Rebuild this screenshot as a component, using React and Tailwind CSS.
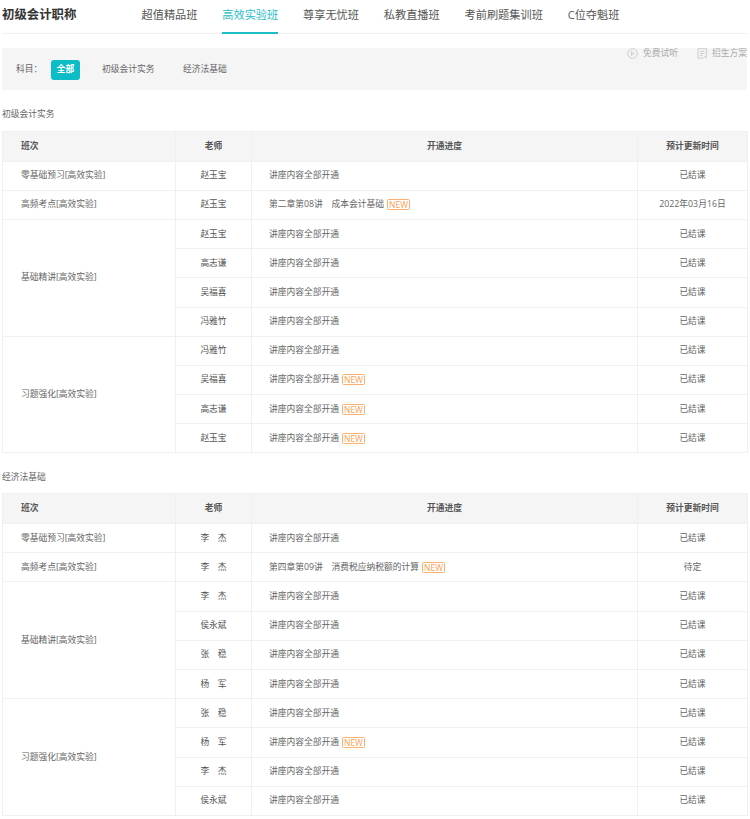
import React from "react";

const FONT = "font-['Open_Sans','Noto_Sans_CJK_SC',sans-serif]";

const tabs = ["超值精品班", "高效实验班", "尊享无忧班", "私教直播班", "考前刷题集训班", "C位夺魁班"];

const done = "讲座内容全部开通";

const sections = [
  {
    title: "初级会计实务",
    groups: [
      { name: "零基础预习[高效实验]", rows: [["赵玉宝", done, false, "已结课"]] },
      { name: "高频考点[高效实验]", rows: [["赵玉宝", "第二章第08讲　成本会计基础", true, "2022年03月16日"]] },
      {
        name: "基础精讲[高效实验]",
        rows: [
          ["赵玉宝", done, false, "已结课"],
          ["高志谦", done, false, "已结课"],
          ["吴福喜", done, false, "已结课"],
          ["冯雅竹", done, false, "已结课"],
        ],
      },
      {
        name: "习题强化[高效实验]",
        rows: [
          ["冯雅竹", done, false, "已结课"],
          ["吴福喜", done, true, "已结课"],
          ["高志谦", done, true, "已结课"],
          ["赵玉宝", done, true, "已结课"],
        ],
      },
    ],
  },
  {
    title: "经济法基础",
    groups: [
      { name: "零基础预习[高效实验]", rows: [["李　杰", done, false, "已结课"]] },
      { name: "高频考点[高效实验]", rows: [["李　杰", "第四章第09讲　消费税应纳税额的计算", true, "待定"]] },
      {
        name: "基础精讲[高效实验]",
        rows: [
          ["李　杰", done, false, "已结课"],
          ["侯永斌", done, false, "已结课"],
          ["张　稳", done, false, "已结课"],
          ["杨　军", done, false, "已结课"],
        ],
      },
      {
        name: "习题强化[高效实验]",
        rows: [
          ["张　稳", done, false, "已结课"],
          ["杨　军", done, true, "已结课"],
          ["李　杰", done, false, "已结课"],
          ["侯永斌", done, false, "已结课"],
        ],
      },
    ],
  },
];

const NewTag = () => (
  <span className="ml-[3px] inline-block h-[11px] w-[23px] rounded-[1.5px] border border-[#fbb070] text-center align-[-1px] text-[8.5px] leading-[9.5px] text-[#fb9f50]">
    NEW
  </span>
);

const cell = "border border-[#f0f0f0] font-normal";

const CourseTable = ({ groups }) => (
  <table className="w-[745px] table-fixed border-collapse text-[8.75px] text-[#666]">
    <colgroup>
      <col className="w-[173px]" />
      <col className="w-[76px]" />
      <col className="w-[386px]" />
      <col className="w-[110px]" />
    </colgroup>
    <thead>
      <tr className="h-[29.6px] bg-[#f5f5f5] font-bold text-[#555]">
        <th className={`${cell} pl-[18px] text-left !font-bold`}>班次</th>
        <th className={`${cell} text-center !font-bold`}>老师</th>
        <th className={`${cell} text-center !font-bold`}>开通进度</th>
        <th className={`${cell} text-center !font-bold`}>预计更新时间</th>
      </tr>
    </thead>
    <tbody>
      {groups.map((group) =>
        group.rows.map((row, i) => (
          <tr key={group.name + i} className="h-[29.2px]">
            {i === 0 && (
              <td rowSpan={group.rows.length} className={`${cell} pl-[18px]`}>
                {group.name}
              </td>
            )}
            <td className={`${cell} text-center text-[#555]`}>{row[0]}</td>
            <td className={`${cell} pl-[17px]`}>
              {row[1]}
              {row[2] && <NewTag />}
            </td>
            <td className={`${cell} text-center`}>{row[3]}</td>
          </tr>
        ))
      )}
    </tbody>
  </table>
);

export default function App() {
  return (
    <div className={`${FONT} relative w-[750px] bg-white pl-[2px] pr-[3px]`}>
      {/* top nav */}
      <div className="flex h-[34px] items-start border-b border-[#f0f0f0]">
        <div className="w-[139.5px] pt-[7px] text-[12.4px] font-bold leading-[16px] text-[#333]">初级会计职称</div>
        <div className="flex gap-[24.8px]">
          {tabs.map((tab) => (
            <div
              key={tab}
              className={`h-[34px] pt-[7px] text-[11.2px] leading-[16px] ${
                tab === "高效实验班" ? "border-b-2 border-[#1fbdc6] text-[#1fbdc6]" : "text-[#555]"
              }`}
            >
              {tab}
            </div>
          ))}
        </div>
      </div>

      {/* filter panel */}
      <div className="mt-[14px] flex h-[42px] items-center rounded-[2px] bg-[#f5f5f5] pl-[14px] pt-[1px] text-[8.75px] text-[#666]">
        <span className="w-[35px]">科目：</span>
        <span className="flex h-[20px] w-[29px] items-center justify-center rounded-[3px] bg-[#0cbcc6] font-bold text-white">全部</span>
        <span className="ml-[22px]">初级会计实务</span>
        <span className="ml-[28.5px]">经济法基础</span>
      </div>

      {/* links over the panel */}
      <div className="absolute right-[3px] top-[47px] flex items-center text-[8.75px] text-[#aaa]">
        <svg width="11" height="11" viewBox="0 0 11 11" fill="none" stroke="#bbb" strokeWidth="0.7">
          <circle cx="5.5" cy="5.5" r="4.7" />
          <path d="M4.4 3.6 7.2 5.5 4.4 7.4Z" />
        </svg>
        <span className="ml-[5px]">免费试听</span>
        <svg className="ml-[19px]" width="11" height="11" viewBox="0 0 11 11" fill="none" stroke="#bbb" strokeWidth="0.7">
          <path d="M6.5 10.2H1V.7h8.6v6.5" />
          <path d="M3 3.4h4.6M3 5.5h4.6M3 7.6h2.4" />
          <circle cx="8.6" cy="8.8" r="1" />
        </svg>
        <span className="ml-[4px]">招生方案</span>
      </div>

      {/* sections */}
      {sections.map((section, idx) => (
        <div key={section.title} className="mt-[18px]">
          <div className={`h-[13px] text-[8.75px] leading-[13px] text-[#666] ${idx === 0 ? "mb-[10px]" : "mb-[9px]"}`}>
            {section.title}
          </div>
          <CourseTable groups={section.groups} />
        </div>
      ))}
      <div className="h-[4px]" />
    </div>
  );
}
